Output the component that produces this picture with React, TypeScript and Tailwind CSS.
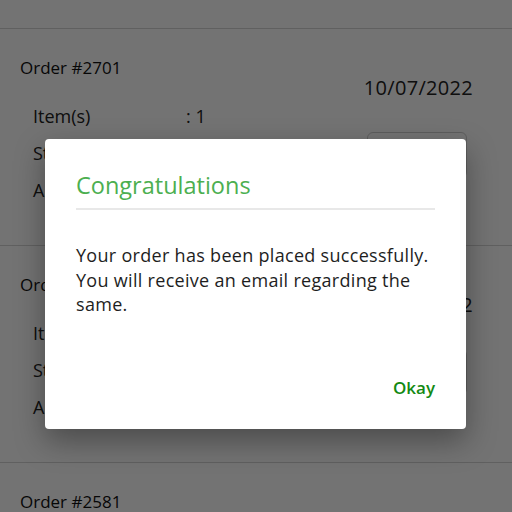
import React from "react";

type Order = { id: string; date: string; items: string };

const orders: Order[] = [
  { id: "2701", date: "10/07/2022", items: "1" },
  { id: "2642", date: "22/06/2022", items: "2" },
  { id: "2581", date: "05/08/2021", items: "1" },
];

function OrderCard({ o }: { o: Order }) {
  return (
    <div className="h-[217px] border-b border-[#d4d4d4] flex pl-5 pr-[39px] overflow-hidden">
      <div className="flex-1 flex flex-col pt-[29px]">
        <div className="text-[17px] leading-[20px] font-medium text-[#111]">Order #{o.id}</div>
        <div className="pl-[13px] mt-[20px] text-[18px] leading-[37px] text-[#222]">
          <div className="flex">
            <span className="w-[153px]">Item(s)</span>
            <span>: {o.items}</span>
          </div>
          <div className="flex">
            <span className="w-[153px]">Status</span>
            <span>: Placed</span>
          </div>
          <div className="flex">
            <span className="w-[153px]">Amount</span>
            <span>: ₹ 499</span>
          </div>
        </div>
      </div>
      <div className="flex flex-col items-end pt-[47px]">
        <div className="text-[20px] leading-[24px] text-[#222] tracking-[0.3px]">{o.date}</div>
        <div className="mt-[32px] mr-[6px] w-[100px] h-[46px] rounded-[6px] border border-[#cfcfcf]" />
      </div>
    </div>
  );
}

export default function App() {
  return (
    <div
      className="relative w-[512px] h-[512px] overflow-hidden bg-white"
      style={{ fontFamily: "'Open Sans', Lato, sans-serif" }}
    >
      <div className="h-[29px] border-b border-[#d4d4d4]" />
      {orders.map((o) => (
        <OrderCard key={o.id} o={o} />
      ))}
      <div className="absolute inset-0 bg-black/55" />
      <div className="absolute left-[45px] top-[139px] w-[421px] h-[290px] bg-white rounded-[4px] shadow-[0_12px_30px_rgba(0,0,0,0.35)] px-[31px] pt-[31px] flex flex-col">
        <div className="text-[23.5px] leading-[30px] font-medium text-[#4caf50] pb-[8px] border-b-2 border-[#e8e8e8]">
          Congratulations
        </div>
        <div className="mt-[33px] text-[18px] leading-[24.5px] text-[#1e1e1e] tracking-[0.3px]">
          Your order has been placed successfully. You will receive an email regarding the same.
        </div>
        <div className="mt-auto mb-[31px] self-end text-[17px] leading-[20px] font-semibold text-[#138a13]">
          Okay
        </div>
      </div>
    </div>
  );
}
